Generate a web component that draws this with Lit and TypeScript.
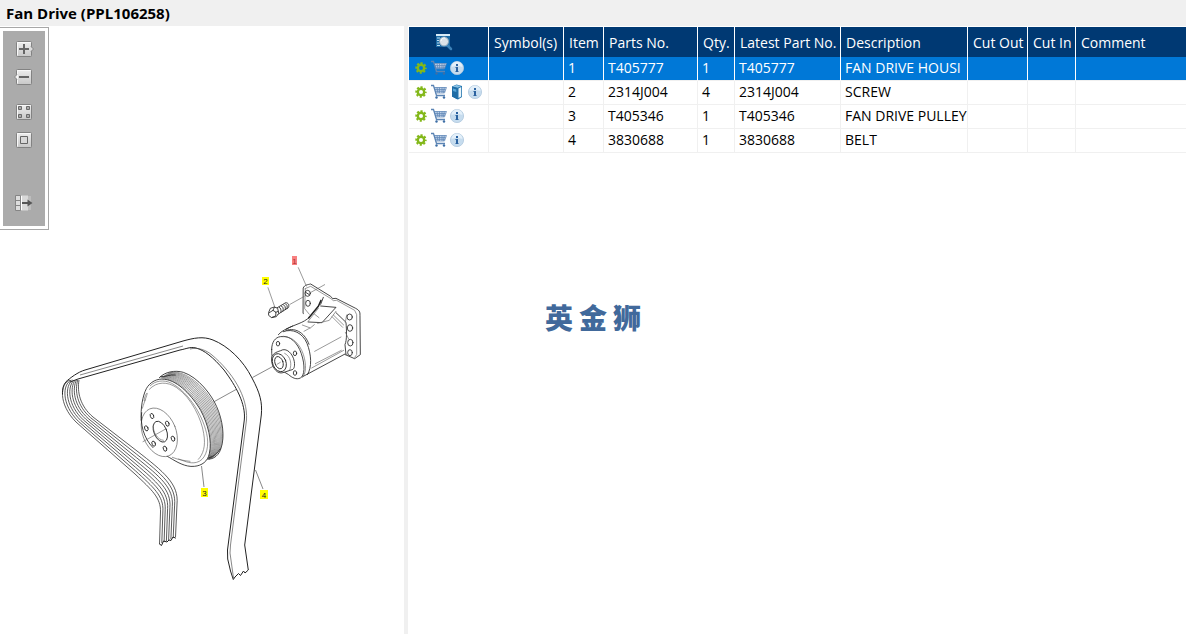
import { LitElement, html, svg, css } from "lit";
import { customElement, property, state } from "lit/decorators.js";
import { classMap } from "lit/directives/class-map.js";

interface Part {
  item: number;
  partNo: string;
  qty: number;
  latest: string;
  description: string;
  hasBook?: boolean;
}

const PARTS: Part[] = [
  { item: 1, partNo: "T405777", qty: 1, latest: "T405777", description: "FAN DRIVE HOUSI" },
  { item: 2, partNo: "2314J004", qty: 4, latest: "2314J004", description: "SCREW", hasBook: true },
  { item: 3, partNo: "T405346", qty: 1, latest: "T405346", description: "FAN DRIVE PULLEY" },
  { item: 4, partNo: "3830688", qty: 1, latest: "3830688", description: "BELT" },
];

/* Blends two curves with the same commands, giving the grooves between two edges. */
function between(commands: string, from: number[], to: number[], t: number): string {
  let i = 0;
  return commands.replace(/#/g, () => {
    const value = from[i] + (to[i] - from[i]) * t;
    i += 1;
    return value.toFixed(1);
  });
}

const steps = (count: number) => Array.from({ length: count + 1 }, (_, i) => i / count);

const BELT = "M# # C# # # # # # L# # C# # # # # # L# #";
const BELT_OUTER = [70, 380, 60, 383, 58, 404, 76, 422, 135, 474, 152, 490, 161, 498, 160.5, 512, 159.5, 544];
const BELT_INNER = [79, 380, 77, 392, 80, 406, 93, 417, 137, 451, 164, 472, 179, 484, 177, 504, 175.5, 537];

const GROOVE = "M# # C# # # # # # C# # # # # #";
const GROOVE_FRONT = [122, 53, 190, 60, 258, 150, 269, 235, 272, 260, 270, 280, 264, 297];
const GROOVE_BACK = [150, 37, 210, 25, 300, 120, 307, 215, 311, 250, 300, 285, 268, 297];

@customElement("part-diagram")
export class PartDiagram extends LitElement {
  @property({ type: Number }) selected = 1;

  static styles = css`
    :host { display: block; }
    svg { display: block; width: 404px; height: 608px; }
    .line { fill: none; stroke: #222; stroke-width: 1; stroke-linejoin: round; stroke-linecap: round; }
    .rib { fill: none; stroke: #333; stroke-width: 0.8; }
    .thin { fill: none; stroke: #555; stroke-width: 0.7; }
    .big { fill: none; stroke: #2a2a2a; stroke-width: 2.6; stroke-linejoin: round; stroke-linecap: round; }
    .heavy { fill: none; stroke: #222; stroke-width: 4.5; stroke-linecap: round; }
    .fine { fill: none; stroke: #666; stroke-width: 2; stroke-linecap: round; }
    .groove { fill: none; stroke: #555; stroke-width: 1.7; }
    .solid { fill: #fff; }
    .tag { fill: #ff0; }
    .tag.on { fill: #f88080; }
    .num { font: 8px "Liberation Sans", Arial, sans-serif; fill: #222; text-anchor: middle; }
    .num.on { fill: #a33; }
  `;

  private callout(n: number, x: number, y: number, w: number, h: number) {
    const on = n === this.selected;
    return svg`
      <rect class=${classMap({ tag: true, on })} x=${x} y=${y} width=${w} height=${h} />
      <text class=${classMap({ num: true, on })} x=${x + w / 2} y=${y + h - 1.5}>${n}</text>`;
  }

  render() {
    return html`
      <svg viewBox="0 26 404 608" role="img" aria-label="Fan drive exploded view">
        <path class="line" d="M66 381.7C70 378 78 372 85 370L183 341C194 338 203 336 213 340C228 346 243 360 252 378C260 393 262.5 402 261.3 415L244.7 545L248.3 570L245 573L243.5 571L240.5 575.5L238.5 573.5L235 577L233.3 579.5L230.5 571L227.7 559L227.5 550L244.3 420C246 404 236 386 224 370C213 357 204 350 196 348C190 346.500 186 349 180 350L78 379L70 382" />
        <path class="thin" d="M190 349C198 347 206 350 212 355C232 372 248 396 246.500 420L230.500 545L230 553L233.500 578M80 375L183 346" />
        ${steps(7).map(t => svg`<path class="rib" d=${between(BELT, BELT_OUTER, BELT_INNER, t)} />`)}
        <path class="line" d="M66 382C63 385 62.500 389 62.500 394M159.500 544L161.500 545.500L163.500 541L167 542L169 540L171 540.500L173 537L175.500 538" />

        <g transform="translate(120 360) scale(.33333)">
          <path class="big solid" d="M118 53C135 35 165 30 190 37C235 52 275 105 290 140C308 180 315 230 303 265C298 283 282 300 262 297" />
          ${steps(11).map(t => svg`<path class="groove" d=${between(GROOVE, GROOVE_FRONT, GROOVE_BACK, t)} />`)}
          <path class="big" d="M122 50C134 52 152 42 166 45M268 293C281 290 293 279 301 266" />
          <path class="big solid" d="M64 180C61 145 68 108 79 86C90 66 112 54 134 58C175 62 218 110 242 151C264 192 277 243 268 281C263 304 246 317 223 319C196 322 169 305 149 293L104 268C82 250 66 215 64 180Z" />
          <path class="fine" d="M91 77C105 62 132 58 155 70C208 98 253 173 262 232C267 270 254 301 230 307C208 313 187 300 176 297M67 145C75 120 88 88 78 103C71 117 71 130 76 120M88 88C110 64 142 64 170 83C216 114 245 180 251 220C258 260 249 283 235 298M157 292C177 300 194 302 210 304" />
          <ellipse class="fine solid" cx="118" cy="217" rx="50" ry="76" transform="rotate(-22 118 217)" />
          <path class="big" d="M65 158C60 190 70 234 99 263" />
          <ellipse class="big" cx="121" cy="215" rx="19" ry="33" transform="rotate(-23 121 215)" />
          <path class="fine" d="M100 195C98 215 111 239 130 241" />
          <g class="big">
            <ellipse cx="96" cy="168" rx="5" ry="8" transform="rotate(-20 96 168)" />
            <ellipse cx="142" cy="191" rx="5" ry="8" transform="rotate(-20 142 191)" />
            <ellipse cx="159" cy="236" rx="5" ry="8" transform="rotate(-20 159 236)" />
            <ellipse cx="135" cy="266" rx="5" ry="8" transform="rotate(-20 135 266)" />
            <ellipse cx="101" cy="251" rx="5" ry="8" transform="rotate(-20 101 251)" />
            <ellipse cx="79" cy="205" rx="5" ry="8" transform="rotate(-20 79 205)" />
          </g>
          <path class="fine" d="M69 245L137 207" />
        </g>
        <path class="thin" d="M213.500 402L236 389.500M252.500 377.500L281 362" />

        <g transform="translate(250 245) scale(.33333)">
          <path class="big solid" d="M160 128C164 119 174 119 182 117L242 154L248 161L258 160L317 190C327 195 331 200 330 211L331 329L314 341L286 329L160 206Z" />
          <path class="solid" d="M162 206L110 252L160 300L286 329L284 300L240 226Z" />
          <path class="fine" d="M165 131L182 124L243 161L250 167L260 166L314 196L320 209L320 329L314 337M166 132L164 191L178 208" />
          <path class="heavy" d="M176 219L205 184L213 166" />
          <path class="big" d="M212 178L220 157M109 252C137 237 159 235 178 217M257 188L216 233L175 231M212 183L257 187M258 203L288 232C290 259 291 284 285 299L288 329" />
          <path class="fine" d="M258 199L238 226L203 235M250 210L281 240M246 215L278 247M205 190L173 231M193 207L207 218M157 240L181 249L193 239M162 259L180 249M290 210L286 232M286 262L296 282" />
          <g class="big">
            <ellipse cx="173" cy="145" rx="8" ry="9" /><path d="M167 142L178 149" />
            <ellipse cx="174" cy="175" rx="7" ry="9" />
            <ellipse cx="299" cy="216" rx="8" ry="9" />
            <ellipse cx="300" cy="249" rx="8" ry="10" />
            <ellipse cx="301" cy="293" rx="8" ry="10" />
            <ellipse cx="300" cy="323" rx="7" ry="9" />
          </g>
          <path class="big" d="M85 269C95 257 109 252 128 243M158 395L285 327" />
          <path class="fine" d="M185 369L281 316M194 319L273 276M196 356L274 316" />
          <path class="big" d="M100 260C128 249 158 264 171 295C184 328 187 367 172 389M108 256C140 246 166 267 177 298" />
          <path class="big solid" d="M65 313C65 291 76 277 91 275C119 269 143 293 154 326C166 361 164 393 151 399C139 405 126 398 116 389L76 365C68 349 64 331 65 313Z" />
          <path class="fine" d="M96 275C126 272 149 296 160 328C170 360 169 387 156 398" />
          <path class="big solid" d="M65 338C67 326 77 322 92 317C109 306 129 326 133 350C135 366 132 374 123 375L99 383C83 388 68 371 65 350Z" />
          <ellipse class="big" cx="88" cy="353" rx="20" ry="28" transform="rotate(-22 88 353)" />
          <ellipse class="big" cx="87" cy="353" rx="12" ry="19" transform="rotate(-20 87 353)" />
          <path class="fine" d="M104 325C123 334 126 359 119 375" />
          <g class="big">
            <ellipse cx="84" cy="296" rx="5" ry="7" />
            <ellipse cx="135" cy="325" rx="5" ry="7" />
            <ellipse cx="135" cy="384" rx="5" ry="7" />
          </g>
          <path class="fine" d="M81 358L91 352" />

          <path class="fine" d="M145 68L169 123M54 128L75 188M120 178L163 154M181 143L224 119" />
          <path class="big solid" d="M77 191L107 173C115 173 119 181 115 188L82 209Z" />
          <path class="big" d="M88 187C92 188 94 195 93 202M94 183C99 184 101 191 99 198M101 180C105 181 107 187 106 194M107 177C111 178 113 184 111 191" />
          <path class="big solid" d="M56 202L61 190L73 186L83 190L86 205L79 215L65 218L57 212Z" />
          <path class="big" d="M58 203L69 196L78 202L77 213L66 217M69 196L73 187M77 202L85 199" />
        </g>
        <path class="thin" d="M201.500 466L204 487M255.500 470L263 489" />

        ${this.callout(1, 292, 256, 5, 9)}
        ${this.callout(2, 262, 277, 7, 8)}
        ${this.callout(3, 201, 488, 7, 9)}
        ${this.callout(4, 260, 490, 8, 9)}
      </svg>`;
  }
}

const gear = svg`
  <svg class="icon" viewBox="0 0 18 16" aria-hidden="true">
    <circle cx="9" cy="8" r="3.200" fill="none" stroke="#83b81a" stroke-width="2.400" />
    <circle cx="9" cy="8" r="4.700" fill="none" stroke="#83b81a" stroke-width="2" stroke-dasharray="2.100 1.591" stroke-dashoffset="1.050" />
  </svg>`;

const cart = svg`
  <svg class="icon" viewBox="0 0 18 16" aria-hidden="true">
    <path d="M4 3H16.500L14.500 8.500H6Z" fill="#bcd0e8" />
    <path d="M1 1.500H3.500L6.500 11.500H15" fill="none" stroke="#5b84b4" stroke-width="1.300" />
    <path d="M4 3.500H16.500L14.500 9H5.500M5 5.500H15.500M5.500 7.300H15M7 3.500L8 9M9.500 3.500V9M12 3.500V9M14.300 3.500L13.500 9" fill="none" stroke="#5b84b4" stroke-width=".7" />
    <circle cx="6.500" cy="13.500" r="1.200" fill="#3d6ea5" /><circle cx="14" cy="13.500" r="1.200" fill="#3d6ea5" />
  </svg>`;

const book = svg`
  <svg class="icon" viewBox="0 0 18 16" aria-hidden="true">
    <path d="M4 2.500L8.500 .5L14 2V13L10 15.500L4 12.500Z" fill="#2476ae" />
    <path d="M4.500 2.500L8.500 1L13 2.200L9.500 3.800Z" fill="#8cc3e6" />
    <path d="M10.500 4.500L13.200 3V12.500L10.500 14Z" fill="#e8f4fb" />
    <path d="M4 2.500L9.500 4V15.500L4 12.500Z" fill="#206da6" />
    <path d="M5 4.500L8.300 5.500V8L5 7Z" fill="#5aa7d8" />
  </svg>`;

const info = svg`
  <svg class="icon" viewBox="0 0 18 16" aria-hidden="true">
    <circle cx="9" cy="8" r="6.600" fill="#c6dcee" stroke="#b0c8dd" stroke-width=".8" />
    <path d="M3.500 7A5.500 5.500 0 0 1 14.500 7Q9 5 3.500 7Z" fill="#e3eff9" />
    <path d="M8 4H10V6H8ZM7.500 7H10V11H10.500V12H7.500V11H8V8H7.500Z" fill="#2b62a0" />
  </svg>`;

@customElement("app-root")
export class AppRoot extends LitElement {
  @state() private selected = 1;

  static styles = css`
    :host {
      display: block;
      position: relative;
      min-height: 100vh;
      color: #000;
      background: #fff;
      font-family: "Segoe UI", "Open Sans", "Noto Sans", sans-serif;
      font-size: 14px;
    }
    .page { display: flex; flex-direction: column; min-height: 100vh; }
    .title {
      margin: 0;
      padding: 0 6px;
      height: 26px;
      line-height: 27px;
      font-size: 15px;
      font-weight: 700;
      background: #f0f0f0;
    }
    .split { flex: 1; display: grid; grid-template-columns: 404px 4px minmax(0, 1fr); }
    .drawing { display: grid; grid-template-columns: 100%; align-items: start; }
    .drawing > * { grid-area: 1 / 1; }
    .bar {
      justify-self: start;
      margin-top: 1px;
      padding: 3px;
      border: 1px solid #a7a7a7;
      border-left: 0;
      background: #fff;
    }
    .tools {
      display: flex;
      flex-direction: column;
      align-items: center;
      gap: 12px;
      width: 42px;
      padding: 10px 0 15px;
      background: #ababab;
      box-sizing: border-box;
    }
    .tool { display: block; padding: 0; border: 0; background: none; height: 16px; width: 20px; cursor: pointer; }
    .tool svg { display: block; width: 20px; height: 16px; }
    .tool.fit { margin-top: 7px; }
    .tool.dock { margin-top: 35px; }
    .handle { background: #f0f0f0; cursor: col-resize; }
    .list { padding: 1px 0 0 1px; }
    table { width: 100%; table-layout: fixed; border-collapse: separate; border-spacing: 0; }
    th, td {
      box-sizing: border-box;
      overflow: hidden;
      white-space: nowrap;
      text-align: left;
      font-weight: 400;
      border-right: 1px solid #f0f0f0;
    }
    th { height: 30px; line-height: 28px; padding: 2px 0 0 5px; color: #fff; background: #003973; border-color: #fff; }
    td { height: 24px; line-height: 22px; padding: 0 0 1px 4px; border-bottom: 1px solid #f0f0f0; }
    th:last-child, td:last-child { border-right: 0; }
    tr.on td { color: #fff; background: #0078d7; border-right-color: #fff; }
    .c-act { width: 80px; } .c-sym { width: 75px; } .c-item { width: 40px; } .c-no { width: 94px; }
    .c-qty { width: 37px; } .c-latest { width: 106px; } .c-desc { width: 127px; }
    .c-out { width: 60px; } .c-in { width: 48px; }
    th.find { padding: 0 10px 0 0; }
    .find svg { display: block; margin: 0 auto; width: 18px; height: 18px; }
    td.acts { padding: 0 0 1px 3px; }
    .row { display: flex; align-items: center; height: 22px; }
    .act { display: block; border: 0; padding: 0; background: none; cursor: pointer; }
    .icon { display: block; width: 18px; height: 16px; }
    .mark {
      position: absolute;
      inset: 0;
      display: flex;
      align-items: center;
      justify-content: center;
      gap: 6px;
      pointer-events: none;
      color: #41699b;
      font: 900 28px/28px "Noto Sans CJK SC", sans-serif;
    }
  `;

  private tool(label: string, extra: string, art: unknown) {
    return html`<button class="tool ${extra}" aria-label=${label}>
      <svg viewBox="0 0 20 16">
        <defs><linearGradient id="g" x2="0" y2="1"><stop stop-color="#eee" /><stop offset="1" stop-color="#c8c8c8" /></linearGradient></defs>
        ${art}
      </svg>
    </button>`;
  }

  render() {
    const plate = svg`<rect x="2.500" y=".5" width="15" height="15" rx="1" fill="url(#g)" stroke="#828282" /><path d="M3.500 14.500V1.500H16.500" fill="none" stroke="#f8f8f8" />`;
    return html`
      <div class="page">
        <h1 class="title">Fan Drive (PPL106258)</h1>
        <main class="split">
          <section class="drawing">
            <part-diagram .selected=${this.selected}></part-diagram>
            <div class="bar">
              <div class="tools" role="toolbar" aria-label="Zoom">
                ${this.tool("Zoom in", "", svg`${plate}<path d="M17 5.500L19.500 8L17 10.500" fill="#ddd" stroke="#828282" /><path d="M5 8H15M10 3V13" stroke="#666" stroke-width="2" />`)}
                ${this.tool("Zoom out", "", svg`${plate}<path d="M3 5.500L.5 8L3 10.500" fill="#eee" stroke="#828282" /><path d="M5 8H15" stroke="#666" stroke-width="2" />`)}
                ${this.tool("Fit page", "fit", svg`${plate}<path d="M4.500 2.500h3v3h-3zM12.500 2.500h3v3h-3zM4.500 10.500h3v3h-3zM12.500 10.500h3v3h-3z" fill="#aaa" stroke="#6a6a6a" />`)}
                ${this.tool("Actual size", "", svg`${plate}<path d="M6.500 4.500h7v7h-7z" fill="#d8d8d8" stroke="#666" />`)}
                ${this.tool("Toggle list", "dock", svg`<path d="M1.500 .5H6.500V15.500H1.500Z" fill="#ddd" stroke="#858585" /><path d="M1 5.500H6M1 10.500H6" stroke="#858585" /><path d="M7 .5H14V15.500H7Z" fill="#d8d8d8" /><path d="M14 1H17V15H14Z" fill="#bdbdbd" /><path d="M7.500 1V15" stroke="#fff" /><path d="M8 8H15" stroke="#555" stroke-width="2" /><path d="M13.500 4.500L18.500 8L13.500 11.500Z" fill="#555" />`)}
              </div>
            </div>
          </section>
          <div class="handle" role="separator" aria-orientation="vertical"></div>
          <section class="list">
            <table>
              <colgroup>
                <col class="c-act" /><col class="c-sym" /><col class="c-item" /><col class="c-no" /><col class="c-qty" />
                <col class="c-latest" /><col class="c-desc" /><col class="c-out" /><col class="c-in" /><col />
              </colgroup>
              <thead>
                <tr>
                  <th class="find" scope="col" aria-label="Actions">
                    <svg viewBox="0 0 18 18">
                      <path d="M1 1H15V14H1Z" fill="#1b6aa5" /><path d="M1 1H15V3H1Z" fill="#d7ebf7" />
                      <path d="M2 5H5M2 7.500H4M2 10H4M2 12.500H5" stroke="#b8dcf2" />
                      <path d="M12 12L16 16" stroke="#3c82b8" stroke-width="2.500" stroke-linecap="round" />
                      <circle cx="9" cy="8.500" r="4.500" fill="#dce3e8" stroke="#8faabf" />
                      <path d="M6 8A3.500 3.500 0 0 1 10 5" fill="none" stroke="#fff" />
                    </svg>
                  </th>
                  ${["Symbol(s)", "Item", "Parts No.", "Qty.", "Latest Part No.", "Description", "Cut Out", "Cut In", "Comment"].map(h => html`<th scope="col">${h}</th>`)}
                </tr>
              </thead>
              <tbody>
                ${PARTS.map(p => html`
                  <tr class=${classMap({ on: p.item === this.selected })} @click=${() => (this.selected = p.item)}>
                    <td class="acts">
                      <div class="row">
                        <button class="act" aria-label="Options">${gear}</button>
                        <button class="act" aria-label="Add to cart">${cart}</button>
                        ${p.hasBook ? html`<button class="act" aria-label="Manual">${book}</button>` : ""}
                        <button class="act" aria-label="Information">${info}</button>
                      </div>
                    </td>
                    <td></td>
                    <td>${p.item}</td>
                    <td>${p.partNo}</td>
                    <td>${p.qty}</td>
                    <td>${p.latest}</td>
                    <td>${p.description}</td>
                    <td></td>
                    <td></td>
                    <td></td>
                  </tr>`)}
              </tbody>
            </table>
          </section>
        </main>
      </div>
      <div class="mark" lang="zh"><span>英</span><span>金</span><span>狮</span></div>`;
  }
}
